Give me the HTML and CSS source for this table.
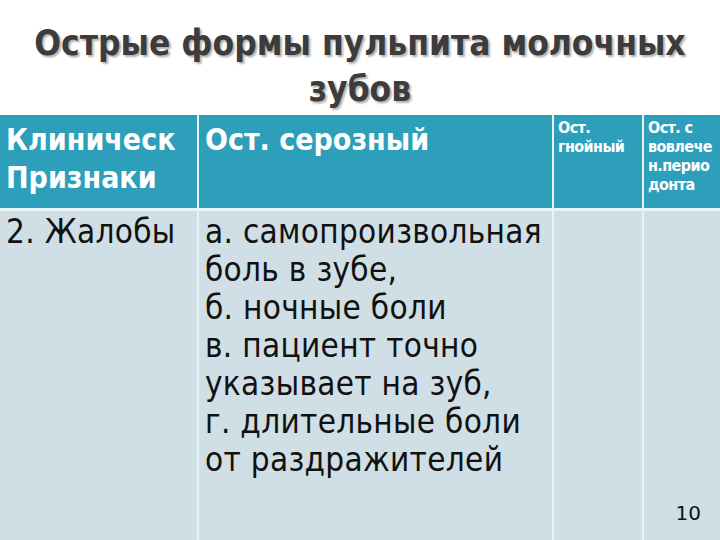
FILE: index.html
```html
<!DOCTYPE html>
<html lang="ru">
<head>
<meta charset="utf-8">
<link rel="stylesheet" href="styles.css">
</head>
<body>
<div class="slide">
  <h1 class="title">Острые формы пульпита молочных<br>зубов</h1>
  <div class="table">
    <div class="cell head big">Клиническ<br>Признаки</div>
    <div class="cell head big">Ост. серозный</div>
    <div class="cell head small">Ост.<br>гнойный</div>
    <div class="cell head small">Ост. с<br>вовлече<br>н.перио<br>донта</div>
    <div class="cell body">2. Жалобы</div>
    <div class="cell body">а. самопроизвольная<br>боль в зубе,<br>б. ночные боли<br>в. пациент точно<br>указывает на зуб,<br>г. длительные боли<br>от раздражителей</div>
    <div class="cell body"></div>
    <div class="cell body"></div>
  </div>
  <div class="page">10</div>
</div>
</body>
</html>
```
FILE: styles.css
```css
html, body {
  margin: 0;
  padding: 0;
  background: #ffffff;
}
.slide {
  position: relative;
  width: 720px;
  height: 540px;
  overflow: hidden;
  display: flex;
  flex-direction: column;
}
.title {
  margin: 0;
  height: 115px;
  flex: none;
  box-sizing: border-box;
  padding-top: 20px;
  font-family: "DejaVu Sans Condensed", "DejaVu Sans", sans-serif;
  font-weight: 600;
  font-size: 35px;
  line-height: 46px;
  text-align: center;
  color: #3c3c3c;
  text-shadow: 2px 2px 2px rgba(0, 0, 0, 0.3);
}
.table {
  flex: 1;
  display: grid;
  grid-template-columns: 197px 353px 88px 76px;
  grid-template-rows: 93px 1fr;
  column-gap: 2px;
  row-gap: 3px;
  background: #e6f4f8;
}
.cell {
  box-sizing: border-box;
}
.head {
  background: #2e9fbb;
  color: #ffffff;
}
.head.big {
  font-family: "DejaVu Sans Condensed", "DejaVu Sans", sans-serif;
  font-weight: bold;
  font-size: 30px;
  line-height: 38px;
  padding: 6px 0 0 6px;
}
.head.small {
  font-family: "DejaVu Sans Condensed", "DejaVu Sans", sans-serif;
  font-weight: bold;
  font-size: 16px;
  line-height: 19px;
  letter-spacing: -0.6px;
  padding: 3px 0 0 4px;
  white-space: nowrap;
}
.body {
  background: #cfdfe5;
  color: #111111;
  font-family: "DejaVu Sans Condensed", "DejaVu Sans", sans-serif;
  font-size: 33px;
  line-height: 38px;
  letter-spacing: 0.3px;
  padding: 2px 0 0 6px;
}
.page {
  position: absolute;
  right: 19px;
  bottom: 15px;
  font-family: "DejaVu Sans", sans-serif;
  font-size: 20px;
  color: #111111;
}
```
